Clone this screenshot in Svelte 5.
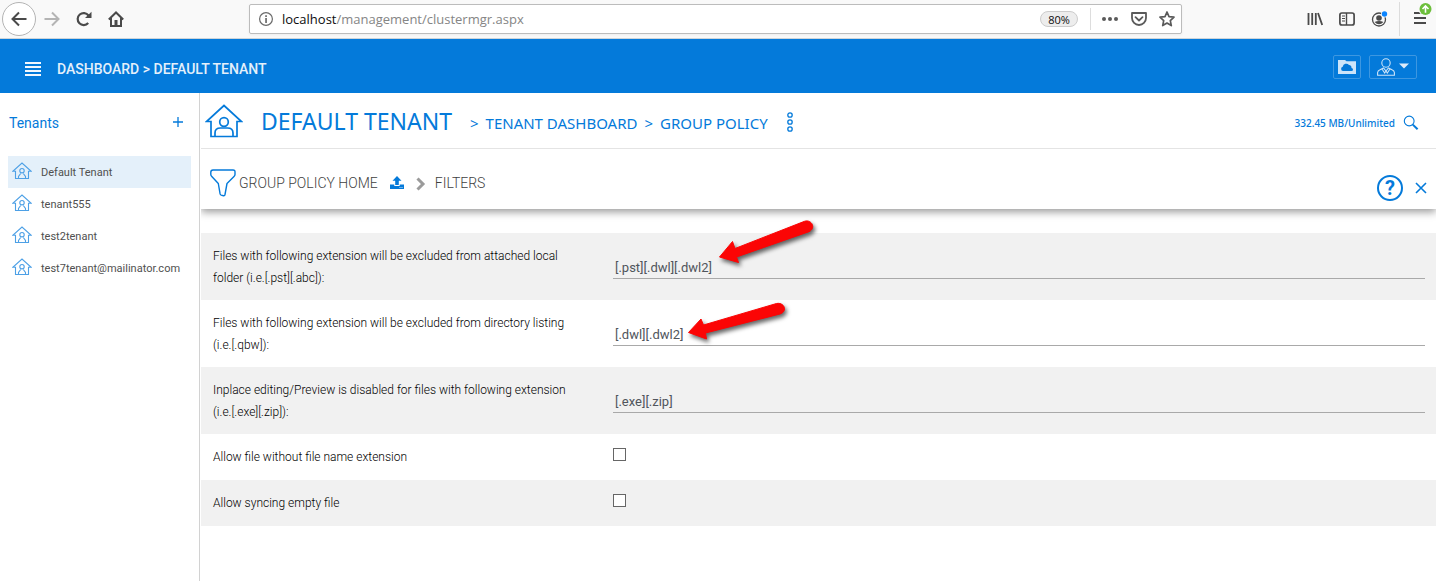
<script>
  const tenants = ['Default Tenant', 'tenant555', 'test2tenant', 'test7tenant@mailinator.com'];
  let current = $state('Default Tenant');
  let url = 'localhost/management/clustermgr.aspx';
  const [host, ...rest] = url.split('/');

  let fields = $state([
    { id: 'excl-local', label: 'Files with following extension will be excluded from attached local folder (i.e.[.pst][.abc]):', value: '[.pst][.dwl][.dwl2]', arrow: 'first' },
    { id: 'excl-list', label: 'Files with following extension will be excluded from directory listing (i.e.[.qbw]):', value: '[.dwl][.dwl2]', arrow: 'second' },
    { id: 'no-preview', label: 'Inplace editing/Preview is disabled for files with following extension (i.e.[.exe][.zip]):', value: '[.exe][.zip]', arrow: '' }
  ]);
  let checks = $state([
    { id: 'no-ext', label: 'Allow file without file name extension', on: false },
    { id: 'empty-file', label: 'Allow syncing empty file', on: false }
  ]);
</script>

{#snippet arrow(kind)}
  {#if kind === 'first'}
    <svg class="arrow first" width="104" height="52" viewBox="0 0 104 52" aria-hidden="true">
      <path d="M3.500 38 16.500 22.500 19 29.500 88.500 2.300C95.500 0 100.500 9 93 12.700L20.500 38 22.500 43.500Z" fill="#fb0505" stroke="#fb0505" stroke-linejoin="round" />
    </svg>
  {:else if kind === 'second'}
    <svg class="arrow second" width="104" height="48" viewBox="0 0 104 48" aria-hidden="true">
      <path d="M2.500 32.500 15 19 17.500 25 90.500 3.500C98.500 2 102 11.500 94 14L19.500 33 20.500 39Z" fill="#fb0505" stroke="#fb0505" stroke-linejoin="round" />
    </svg>
  {/if}
{/snippet}

<div class="page">
  <header class="browser">
    <div class="nav">
      <button class="back" aria-label="Back">
        <svg width="16" height="16" viewBox="0 0 16 16" fill="none" stroke="#4a4a4a" stroke-width="2"><path d="M15.500 8H1.500M8 1.500 1.500 8 8 14.500" /></svg>
      </button>
      <button aria-label="Forward">
        <svg width="16" height="16" viewBox="0 0 16 16" fill="none" stroke="#b4b4b4" stroke-width="2"><path d="M.5 8h14M8 1.500 14.500 8 8 14.500" /></svg>
      </button>
      <button aria-label="Reload">
        <svg width="16" height="16" viewBox="0 0 16 16"><path d="M12.200 12A6 6 0 1 1 12.500 4.500" fill="none" stroke="#4a4a4a" stroke-width="2.200" /><path d="M15.500.8V7H9Z" fill="#4a4a4a" /></svg>
      </button>
      <button aria-label="Home">
        <svg width="16" height="16" viewBox="0 0 16 16" fill="none" stroke="#4a4a4a" stroke-width="2"><path d="M.8 8.500 8 1.500 15.200 8.500M3 7V15H13V7" /><path d="M8 9v6" stroke-width="3" /></svg>
      </button>
    </div>
    <div class="address">
      <svg width="16" height="16" viewBox="0 0 16 16"><circle cx="8" cy="8" r="6.400" fill="none" stroke="#6b6b6b" stroke-width="1.200" /><path d="M7.200 4.200h1.700v1.700H7.200ZM7.200 7h1.700v5H7.200Z" fill="#6b6b6b" /></svg>
      <span class="url"><b>{host}</b>/{rest.join('/')}</span>
      <button class="zoom">80%</button>
      <span class="split"></span>
      <button aria-label="Page actions">
        <svg width="18" height="16" viewBox="0 0 18 16" fill="#5a5a5a"><circle cx="3" cy="8" r="2" /><circle cx="9" cy="8" r="2" /><circle cx="15" cy="8" r="2" /></svg>
      </button>
      <button aria-label="Save to Pocket">
        <svg width="16" height="16" viewBox="0 0 16 16" fill="none" stroke="#5a5a5a" stroke-width="1.800" stroke-linejoin="round"><path d="M1 2h14v5a7 7 0 0 1-14 0Z" /><path d="M4.500 6.200 8 9.500l3.500-3.300" stroke-linecap="round" /></svg>
      </button>
      <button aria-label="Bookmark">
        <svg width="16" height="16" viewBox="0 0 16 16" fill="none" stroke="#5a5a5a" stroke-width="1.700" stroke-linejoin="round"><path d="m8 1 2 4.700 5 .5-3.700 3.400 1 5L8 12l-4.300 2.600 1-5L1 6.200l5-.5Z" /></svg>
      </button>
    </div>
    <div class="tools">
      <button aria-label="Library">
        <svg width="16" height="16" viewBox="0 0 16 16" stroke="#4a4a4a" stroke-width="1.800"><path d="M1.500 2v12M5.200 2v12M8.800 2v12M11 2l4.200 12" /></svg>
      </button>
      <button aria-label="Sidebars">
        <svg width="16" height="16" viewBox="0 0 16 16" fill="none" stroke="#4a4a4a"><rect x=".9" y="2" width="14.200" height="12" rx="2" stroke-width="1.700" /><path d="M7.500 2v12" stroke-width="1.400" /><path d="M3 5h3M3 7.500h3M3 10h3" /></svg>
      </button>
      <button aria-label="Account">
        <svg width="18" height="16" viewBox="0 0 18 16"><circle cx="8" cy="8.500" r="6.500" fill="none" stroke="#4a4a4a" stroke-width="1.300" /><circle cx="8" cy="7" r="2.800" fill="#4a4a4a" /><path d="M3.500 11Q8 9 12.500 11 8 15.500 3.500 11Z" fill="#4a4a4a" /><circle cx="13.500" cy="3" r="3.500" fill="#f9f9f9" /><circle cx="13.500" cy="3" r="2.700" fill="#0a84ff" /></svg>
      </button>
      <span class="bar"></span>
      <button aria-label="Open menu">
        <svg width="20" height="32" viewBox="0 0 20 32"><path d="M2 10h12M2 15h12M2 20h12" stroke="#4a4a4a" stroke-width="2" /><circle cx="13.500" cy="6" r="7" fill="#f9f9f9" /><circle cx="13.500" cy="6" r="6" fill="#6dbf3c" /><path d="M13.500 9.700V3.500M10.500 6 13.500 3l3 3" fill="none" stroke="#fff" stroke-width="1.600" /></svg>
      </button>
    </div>
  </header>

  <div class="appbar">
    <button class="burger" aria-label="Toggle menu">
      <svg width="16" height="14" viewBox="0 0 16 14" stroke="#f2f8fe" stroke-width="2"><path d="M0 1h16M0 5h16M0 9h16M0 13h16" /></svg>
    </button>
    <span class="where">DASHBOARD &gt; DEFAULT TENANT</span>
    <button class="boxed folder" aria-label="Cloud folder">
      <svg width="18" height="14" viewBox="0 0 18 14"><path d="M0 0h7l1.500 1.200H18V14H0Z" fill="#cde4f9" /><path d="M5 11a2.200 2.200 0 0 1-.3-4.300A3.600 3.600 0 0 1 11 5 2.800 2.800 0 0 1 13.500 8a1.500 1.500 0 0 1 0 3Z" fill="#0478d8" /></svg>
    </button>
    <button class="boxed user" aria-label="User menu">
      <svg width="18" height="18" viewBox="0 0 18 18" fill="none" stroke="#cde4f9" stroke-width="1.100"><circle cx="9" cy="5" r="4.200" /><path d="M.6 17.200v-2.700Q.8 12.500 3 11.700L6.500 10 9 13l2.500-3 3.500 1.700q2.200.8 2.400 2.800v2.700ZM5 11l2.700 4L9 13l1.300 2L13 11" /></svg>
      <svg width="10" height="10" viewBox="0 0 10 10"><path d="M0 1.500h10L5 6.500Z" fill="#dcebfa" /></svg>
    </button>
  </div>

  <div class="body">
    <aside>
      <div class="sidehead">
        <span>Tenants</span>
        <button aria-label="Add tenant">
          <svg width="12" height="12" viewBox="0 0 12 12" stroke="#047ada" stroke-width="1.300"><path d="M6 1v10M1 6h10" /></svg>
        </button>
      </div>
      <nav>
        {#each tenants as name}
          <a href="#tenant" class:active={name === current} onclick={() => (current = name)}>
            <svg width="20" height="20" viewBox="0 0 20 20" fill="none" stroke="#4da0e6" stroke-width="1.100"><path d="M3.500 9.300H.8L10 1l9.200 8.300h-2.700V16.500h-13Z" /><circle cx="10" cy="8.700" r="2.200" /><path d="M6.500 16.500v-2l2.200-3M13.500 16.500v-2l-2.200-3" /></svg>
            {name}
          </a>
        {/each}
      </nav>
    </aside>

    <main>
      <div class="titlebar">
        <svg width="38" height="34" viewBox="0 0 38 34" fill="none" stroke="#047ada" stroke-width="1.700"><path d="M6 17.500H1.500L19 1.500l17.500 16H32V32.500H6Z" /><circle cx="19" cy="18" r="4.300" /><path d="M10 32.500v-3.500q0-5 5.500-5h7q5.500 0 5.500 5v3.500" /></svg>
        <h1>DEFAULT TENANT</h1>
        <div class="trail">
          <span>&gt;</span><a href="#dashboard">TENANT DASHBOARD</a><span>&gt;</span><a href="#policy">GROUP POLICY</a>
        </div>
        <button class="dots" aria-label="More">
          <svg width="8" height="20" viewBox="0 0 8 20" fill="none" stroke="#047ada" stroke-width="1.300"><circle cx="4" cy="3" r="2.200" /><circle cx="4" cy="10" r="2.200" /><circle cx="4" cy="17" r="2.200" /></svg>
        </button>
        <span class="quota">332.45 MB/Unlimited</span>
        <button class="search" aria-label="Search">
          <svg width="16" height="16" viewBox="0 0 16 16" fill="none" stroke="#047ada" stroke-width="1.100"><circle cx="6.200" cy="6" r="4.900" /><path d="m9.800 9.600 4.800 4.600" stroke-width="2" /></svg>
        </button>
      </div>

      <div class="subbar">
        <svg class="funnel" width="26" height="28" viewBox="0 0 26 28" fill="none" stroke="#047ada" stroke-width="1.400" stroke-linejoin="round"><path d="M3 1h20q2.200 0 2 2.200V5.500q0 1-1 2L17 14.500l-2 11q-.2 1.500-1.500 1.200l-2.300-.6q-.9-.3-1.100-1.200L8.300 14.500 1.800 7.500q-1-1-1-2V3.200Q.8 1 3 1Z" /></svg>
        <a href="#home">GROUP POLICY HOME</a>
        <svg class="upload" width="14" height="13" viewBox="0 0 14 13" fill="#047ada"><path d="M7 0 11.500 4.800H8.800V9H5.200V4.800H2.500Z" /><path d="M0 8.500h4.300v1.500h5.400V8.500H14V13H0Z" /><path d="M9.500 11.500h1M11.500 11.500h1" stroke="#fff" stroke-width=".8" /></svg>
        <svg class="chev" width="10" height="14" viewBox="0 0 10 14" fill="none" stroke="#9b9b9b" stroke-width="3"><path d="m1.500 1.500 5.500 5.500-5.500 5.500" /></svg>
        <span>FILTERS</span>
        <button class="help" aria-label="Help">?</button>
        <button aria-label="Close">
          <svg width="12" height="12" viewBox="0 0 12 12" stroke="#047ada" stroke-width="1.600"><path d="m1 1 10 10M11 1 1 11" /></svg>
        </button>
      </div>

      <form>
        {#each fields as f}
          <div class="row text">
            <label for={f.id}>{f.label}</label>
            <div class="cell">
              <input id={f.id} type="text" bind:value={f.value} />
              {@render arrow(f.arrow)}
            </div>
          </div>
        {/each}
        {#each checks as c}
          <div class="row check">
            <label for={c.id}>{c.label}</label>
            <div class="cell"><input id={c.id} type="checkbox" bind:checked={c.on} /></div>
          </div>
        {/each}
      </form>
    </main>
  </div>
</div>

<style>
  :global(body) { margin: 0; background: #fff; }
  .page { min-height: 100vh; display: flex; flex-direction: column; font-family: Roboto, "Liberation Sans", sans-serif; }
  button { padding: 0; border: 0; background: none; font: inherit; color: inherit; display: flex; align-items: center; justify-content: center; cursor: pointer; }
  a { color: inherit; text-decoration: none; }
  svg { flex: none; display: block; }

  .browser { height: 38px; display: flex; align-items: center; background: #f9f9f9; border-bottom: 1px solid #ccd4da; font-family: "Open Sans", "Noto Sans", sans-serif; }
  .nav { flex: 1 1 249px; display: flex; align-items: center; gap: 16px; padding-left: 2px; box-sizing: border-box; }
  .nav .back { width: 34px; height: 34px; box-sizing: border-box; border: 1px solid #b4b4b4; border-radius: 50%; background: #fff; margin-right: -8px; }
  .address { flex: 0 1 933px; height: 30px; box-sizing: border-box; display: flex; align-items: center; gap: 12px; padding: 0 6px 0 8px; border: 1px solid #bcbcbc; border-radius: 2px; background: #fff; box-shadow: 0 1px 3px #0000000d; }
  .url { flex: 1; margin-left: -4px; font-size: 13px; color: #858585; white-space: nowrap; }
  .url b { color: #0c0c0d; font-weight: 400; }
  .zoom { width: 38px; height: 16px; box-sizing: border-box; border: 1px solid #ccc; border-radius: 8px; background: #ededed; color: #0c0c0d; font-size: 11px; }
  .split { width: 1px; height: 22px; background: #ddd; margin-right: -2px; }
  .tools { flex: 1 1 254px; display: flex; align-items: center; justify-content: flex-end; gap: 16px; padding-right: 4px; box-sizing: border-box; }
  .tools .bar { width: 1px; height: 34px; background: #dcdcdc; margin: 0 -4px 0 -6px; }

  .appbar { height: 54px; display: flex; align-items: center; background: #047ada; color: #e4f0fb; padding: 0 19px 0 25px; }
  .burger { margin: 6px 16px 0 0; }
  .where { flex: 1; padding-top: 6px; font-size: 14px; font-weight: 500; }
  .boxed { height: 24px; box-sizing: border-box; border: 1px solid #3d97e1; border-radius: 2px; margin-top: 2px; }
  .folder { width: 28px; margin-right: 8px; }
  .user { width: 48px; gap: 4px; }

  .body { flex: 1; display: flex; }
  aside { flex: none; width: 199px; border-right: 1px solid #d2d2d2; }
  .sidehead { height: 60px; display: flex; align-items: center; justify-content: space-between; padding: 0 15px 0 9px; color: #047ada; font-size: 14px; }
  .sidehead button { width: 12px; height: 12px; margin-bottom: 2px; }
  aside nav { padding: 3px 8px; }
  aside nav a { height: 32px; display: flex; align-items: center; gap: 9px; padding-left: 4px; font-size: 11px; color: #505050; white-space: nowrap; }
  aside nav a.active { background: #e4f0fa; }

  main { flex: 1; min-width: 0; padding-left: 1px; }
  .titlebar { height: 55px; display: flex; align-items: center; padding: 0 17px 0 4px; border-bottom: 1px solid #e4e4e4; color: #047ada; font-family: "Noto Sans", "Open Sans", sans-serif; }
  h1 { margin: 0 18px; font-size: 23px; line-height: 28px; font-weight: 400; white-space: nowrap; }
  .trail { display: flex; gap: 7px; padding-top: 4px; font-size: 15px; line-height: 20px; white-space: nowrap; }
  .dots { margin: 3px 0 0 18px; }
  .quota { margin: 5px 8px 0 auto; font-size: 10px; font-weight: 500; white-space: nowrap; }
  .search { margin-top: 4px; }

  .subbar { height: 60px; display: flex; align-items: center; padding: 0 9px; color: #3f3f3f; font-size: 14px; font-weight: 300; box-shadow: 0 3px 8px #00000066; clip-path: inset(0 0 -14px 0); }
  .funnel { margin: 8px 3px 0 0; }
  .subbar > a, .subbar > span { line-height: 20px; margin-top: 8px; white-space: nowrap; }
  .upload { margin: 7px 12px 0 12px; }
  .chev { margin: 9px 9px 0 0; }
  .help { width: 26px; height: 26px; box-sizing: border-box; border: 2px solid #047ada; border-radius: 50%; color: #047ada; font-size: 20px; font-weight: 700; margin: 0 12px 0 auto; }
  .subbar button { margin-top: 18px; }

  form { padding-top: 24px; }
  .row { display: grid; grid-template-columns: 33% 1fr; align-items: center; padding: 0 11px 0 12px; color: #000; }
  .row:nth-child(odd) { background: #f1f1f1; }
  .text { height: 67px; }
  .check { height: 46px; }
  label { font-size: 12px; font-weight: 300; line-height: 22px; padding-right: 36px; }
  .cell { position: relative; }
  input[type="text"] { display: block; width: 100%; height: 22px; box-sizing: border-box; border: 0; border-bottom: 1px solid #a9a9a9; border-radius: 0; padding: 0 2px; background: transparent; font: 13px Roboto, sans-serif; color: #50555c; outline: 0; }
  .text .cell { padding-top: 2px; }
  input[type="checkbox"] { appearance: none; display: block; width: 13px; height: 13px; margin: 0 0 5px; border: 1px solid #666; background: #fff; }
  .arrow { position: absolute; filter: drop-shadow(2px 3px 2px #0009); overflow: visible; }
  .first { left: 103px; top: -36px; }
  .second { left: 73px; top: -22px; }
</style>
